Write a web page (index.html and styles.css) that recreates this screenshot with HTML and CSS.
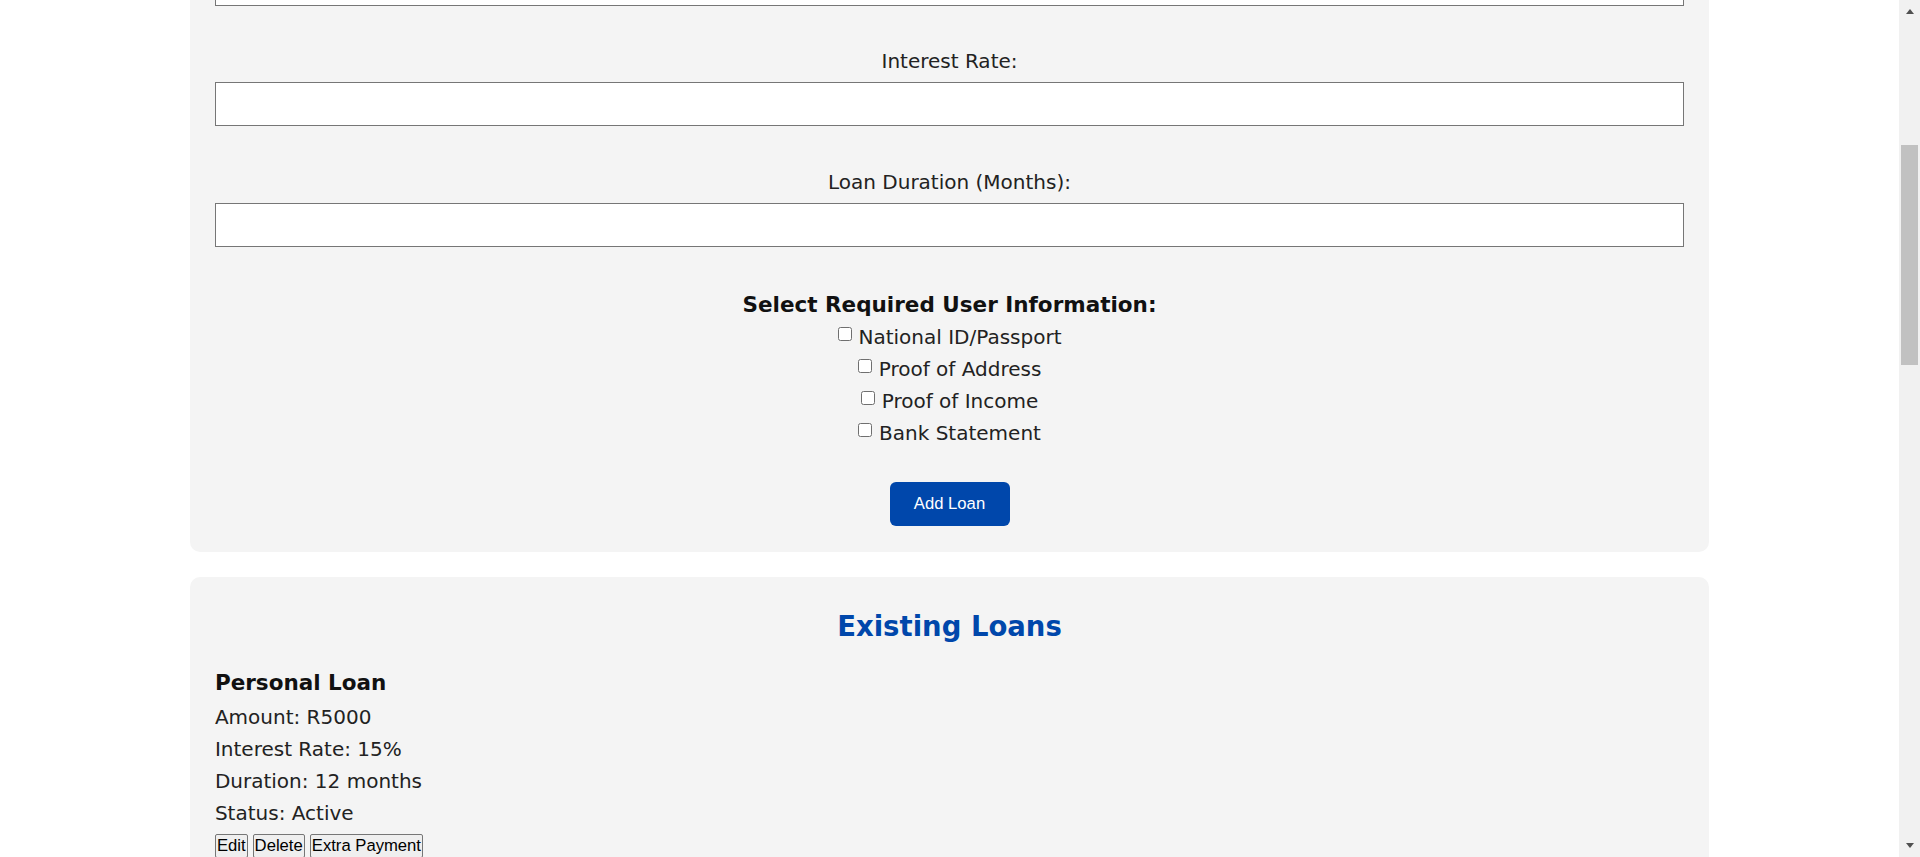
FILE: index.html
```html
<!DOCTYPE html>
<html lang="en">
<head>
<meta charset="utf-8">
<title>Loans</title>
<link rel="stylesheet" href="styles.css">
</head>
<body>
<div class="screen">
  <main class="page">
    <section class="card card-cut">
      <div class="field-tail"></div>
      <label class="field-label" for="rate">Interest Rate:</label>
      <input class="field" id="rate" type="text">
      <label class="field-label" for="dur">Loan Duration (Months):</label>
      <input class="field" id="dur" type="text">
      <h3 class="req-title">Select Required User Information:</h3>
      <div class="checks">
        <label class="check"><input type="checkbox">National ID/Passport</label>
        <label class="check"><input type="checkbox">Proof of Address</label>
        <label class="check"><input type="checkbox">Proof of Income</label>
        <label class="check"><input type="checkbox">Bank Statement</label>
      </div>
      <div class="actions">
        <button class="btn-primary" type="button">Add Loan</button>
      </div>
    </section>
    <section class="card card-loans">
      <h2 class="loans-title">Existing Loans</h2>
      <div class="loan">
        <h3 class="loan-name">Personal Loan</h3>
        <p class="loan-line">Amount: R5000</p>
        <p class="loan-line">Interest Rate: 15%</p>
        <p class="loan-line">Duration: 12 months</p>
        <p class="loan-line">Status: Active</p>
        <div class="loan-buttons">
          <button type="button" class="btn-plain">Edit</button>
          <button type="button" class="btn-plain">Delete</button>
          <button type="button" class="btn-plain">Extra Payment</button>
        </div>
      </div>
    </section>
  </main>
  <div class="scrollbar">
    <div class="sb-arrow sb-up"><span class="tri-up"></span></div>
    <div class="sb-track"><div class="sb-thumb"></div></div>
    <div class="sb-arrow sb-down"><span class="tri-down"></span></div>
  </div>
</div>
</body>
</html>
```

FILE: styles.css
```css
* { box-sizing: border-box; }

html, body {
  margin: 0;
  padding: 0;
  background: #ffffff;
}

body {
  font-family: "DejaVu Sans", sans-serif;
  font-size: 20px;
  color: #222222;
}

.screen {
  display: flex;
  width: 1920px;
  height: 857px;
  overflow: hidden;
}

.page {
  flex: 1;
  min-width: 0;
  overflow: hidden;
}

.card {
  width: 80%;
  margin: 0 auto;
  background: #f4f4f4;
  border-radius: 10px;
  padding: 25px;
  text-align: center;
}

.card-cut {
  border-radius: 0 0 10px 10px;
  padding-top: 0;
  padding-bottom: 26px;
}

.field-tail {
  height: 6px;
  background: #ffffff;
  border: 1px solid #767676;
  border-top: 0;
  margin-bottom: 39px;
}

.field-label {
  display: block;
  line-height: 32px;
  margin-bottom: 5px;
}

.field {
  display: block;
  width: 100%;
  height: 44px;
  margin: 0 0 40px 0;
  border: 1px solid #767676;
  border-radius: 0;
  background: #ffffff;
  font-family: "Liberation Sans", sans-serif;
  font-size: 16.67px;
  padding: 0 10px;
}

.req-title {
  margin: 0;
  font-size: 21.5px;
  line-height: 36px;
  font-weight: bold;
  color: #111111;
}

.checks {
  display: flex;
  flex-direction: column;
  align-items: center;
  margin-top: -2px;
}

.check {
  display: block;
  line-height: 32px;
}

.check input {
  -webkit-appearance: none;
  appearance: none;
  width: 14px;
  height: 14px;
  margin: 0 7px 3px 0;
  border: 1px solid #6f6f6f;
  border-radius: 2.5px;
  background: #ffffff;
  vertical-align: baseline;
}

.actions {
  margin-top: 33px;
  display: flex;
  justify-content: center;
}

.btn-primary {
  width: 120px;
  height: 44px;
  border: 0;
  border-radius: 6px;
  background: #0047ab;
  color: #ffffff;
  font-family: "Liberation Sans", sans-serif;
  font-size: 16.67px;
  padding: 0;
}

.card-loans {
  margin-top: 25px;
  text-align: left;
}

.loans-title {
  margin: 0;
  text-align: center;
  font-size: 27.5px;
  line-height: 48px;
  color: #0047ab;
  font-weight: bold;
}

.loan-name {
  margin: 14.5px 0 0 0;
  font-size: 21.5px;
  line-height: 36px;
  font-weight: bold;
  color: #111111;
}

.loan-line {
  margin: 0;
  line-height: 32px;
}

.loan-buttons {
  display: flex;
  gap: 5px;
  margin-top: 5.5px;
}

.btn-plain {
  font-family: "Liberation Sans", sans-serif;
  font-size: 16.67px;
  line-height: 20px;
  color: #000000;
  background: #efefef;
  border: 1px solid #767676;
  border-radius: 2px;
  padding: 1px 1px;
}

.scrollbar {
  width: 21px;
  flex: none;
  background: #f1f1f1;
  display: flex;
  flex-direction: column;
}

.sb-arrow {
  height: 21px;
  display: flex;
  justify-content: center;
}

.sb-up { align-items: flex-start; padding-top: 9px; }
.sb-down { align-items: flex-end; padding-bottom: 9px; }

.tri-up {
  width: 0;
  height: 0;
  border-left: 4.5px solid transparent;
  border-right: 4.5px solid transparent;
  border-bottom: 5px solid #505050;
}

.tri-down {
  width: 0;
  height: 0;
  border-left: 4.5px solid transparent;
  border-right: 4.5px solid transparent;
  border-top: 5px solid #505050;
}

.sb-track {
  flex: 1;
  padding: 0 2px;
}

.sb-thumb {
  margin-top: 124px;
  height: 220px;
  background: #c1c1c1;
}
```
